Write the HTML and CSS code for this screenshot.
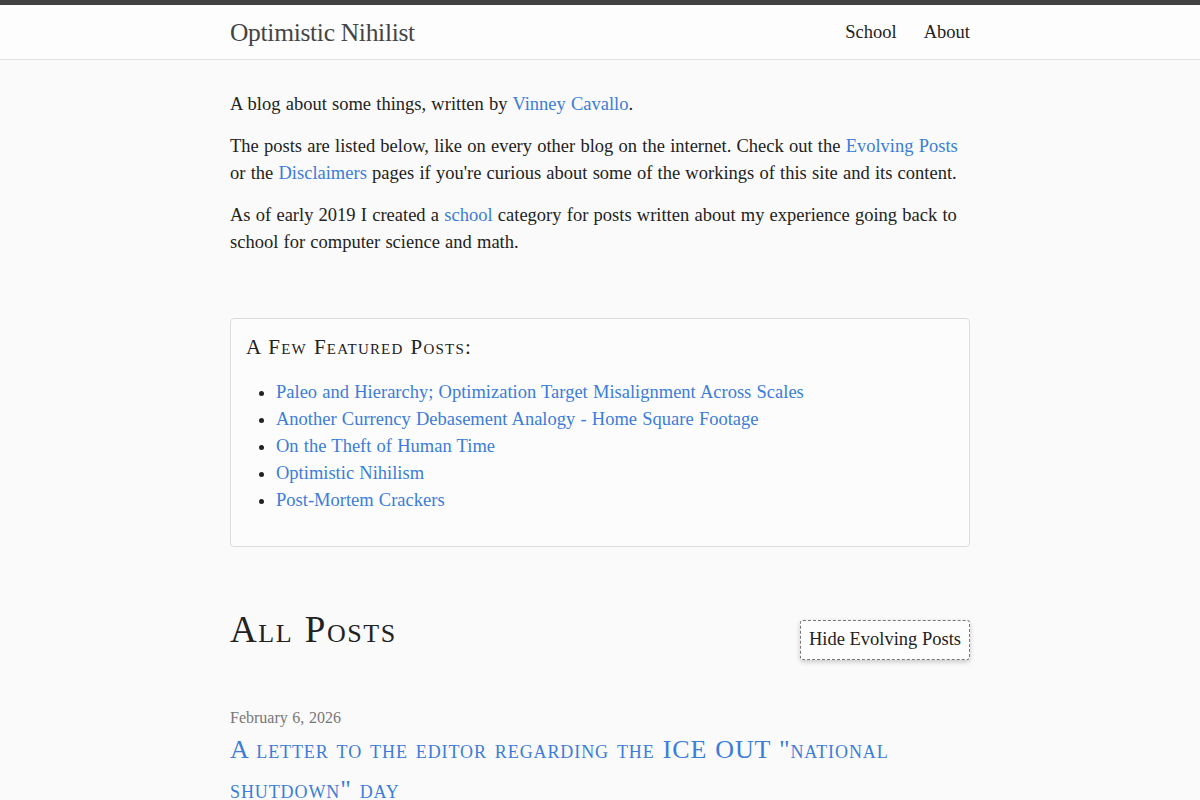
FILE: index.html
```html
<!DOCTYPE html>
<html lang="en">
<head>
    <meta charset="UTF-8">
    <meta name="viewport" content="width=device-width, initial-scale=1.0">
    <title>Optimistic Nihilist</title>
    <link rel="stylesheet" href="styles.css">
</head>
<body>
<header class="site-header">
    <div class="wrapper header-inner">
        <a class="site-title" href="/">Optimistic Nihilist</a>
        <nav class="site-nav">
            <a href="/school/">School</a>
            <a href="/about/">About</a>
        </nav>
    </div>
</header>

<main class="wrapper">
    <div class="intro">
        <p>A blog about some things, written by <a href="/about/">Vinney Cavallo</a>.</p>
        <p>The posts are listed below, like on every other blog on the internet. Check out the <a href="/evolving-posts/">Evolving Posts</a> or the <a href="/disclaimers/">Disclaimers</a> pages if you're curious about some of the workings of this site and its content.</p>
        <p>As of early 2019 I created a <a href="/school/">school</a> category for posts written about my experience going back to school for computer science and math.</p>
    </div>

    <!-- Избранные посты -->
    <div class="featured">
        <h3>A Few Featured Posts:</h3>
        <ul>
            <li><a href="#">Paleo and Hierarchy; Optimization Target Misalignment Across Scales</a></li>
            <li><a href="#">Another Currency Debasement Analogy - Home Square Footage</a></li>
            <li><a href="#">On the Theft of Human Time</a></li>
            <li><a href="#">Optimistic Nihilism</a></li>
            <li><a href="#">Post-Mortem Crackers</a></li>
        </ul>
    </div>

    <div class="posts-head">
        <h1>All Posts</h1>
        <button class="toggle-btn">Hide Evolving Posts</button>
    </div>

    <ul class="post-list">
        <li>
            <span class="post-meta">February 6, 2026</span>
            <h2><a href="#">A letter to the editor regarding the ICE OUT "national shutdown" day</a></h2>
        </li>
    </ul>
</main>

<script>
    // Скрываем/показываем развивающиеся посты
    const toggleBtn = document.querySelector('.toggle-btn');
    toggleBtn.addEventListener('click', function () {
        document.body.classList.toggle('hide-evolving');
        toggleBtn.textContent = document.body.classList.contains('hide-evolving')
            ? 'Show Evolving Posts'
            : 'Hide Evolving Posts';
    });
</script>
</body>
</html>
```

FILE: styles.css
```css
/* Общие стили */
body {
    margin: 0;
    padding: 0;
    font-family: "Liberation Serif", "Times New Roman", serif;
    font-size: 18.5px;
    line-height: 27px;
    word-spacing: 0.6px;
    color: #222;
    background-color: #fafafa;
}

a {
    color: #3b7dd8;
    text-decoration: none;
}

.wrapper {
    max-width: 740px;
    margin: 0 auto;
}

/* Шапка */
.site-header {
    border-top: 5px solid #424242;
    border-bottom: 1px solid #e3e3e3;
    background-color: #fdfdfd;
}

.header-inner {
    display: flex;
    justify-content: space-between;
    align-items: center;
    height: 54px;
}

.site-title {
    font-size: 25.5px;
    color: #444;
    letter-spacing: -0.3px;
    word-spacing: 0;
}

.site-nav a {
    color: #222;
    margin-left: 22px;
}

/* Вступление */
.intro {
    padding-top: 31px;
}

.intro p {
    margin: 0 0 15px;
}

/* Блок избранного */
.featured {
    margin-top: 62px;
    border: 1px solid #dcdcdc;
    border-radius: 4px;
    background-color: #fcfcfc;
    padding: 15px 15px 32px;
}

.featured h3 {
    margin: 0 0 18px;
    font-size: 21px;
    font-weight: normal;
    font-variant: small-caps;
    letter-spacing: 1.2px;
}

.featured ul {
    margin: 0;
    padding-left: 30px;
}

/* Все посты */
.posts-head {
    display: flex;
    justify-content: space-between;
    align-items: flex-start;
    margin-top: 58px;
}

.posts-head h1 {
    margin: 0;
    font-size: 37px;
    line-height: 50px;
    font-weight: normal;
    font-variant: small-caps;
    letter-spacing: 1.6px;
}

.toggle-btn {
    margin-top: 15px;
    padding: 8px 8px 9px;
    font-family: inherit;
    font-size: 18.5px;
    color: #222;
    background-color: #fdfdfd;
    border: 1px dashed #777;
    border-radius: 3px;
    box-shadow: 0 2px 5px rgba(0, 0, 0, 0.2);
    cursor: pointer;
}

.post-list {
    list-style: none;
    margin: 44px 0 0;
    padding: 0;
}

.post-meta {
    font-size: 16px;
    color: #777;
}

.post-list h2 {
    margin: -1px 0 0;
    font-size: 26px;
    line-height: 40px;
    font-weight: normal;
    font-variant: small-caps;
    letter-spacing: 0.9px;
}
```
